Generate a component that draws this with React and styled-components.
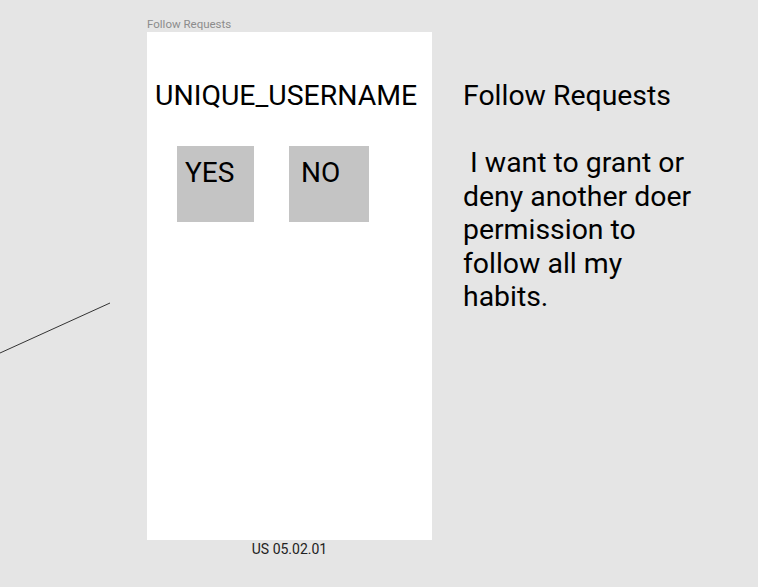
import React from 'react'
import styled, { createGlobalStyle } from 'styled-components'

const GlobalStyle = createGlobalStyle`
  html, body {
    margin: 0;
    padding: 0;
    background-color: #e5e5e5;
  }
  body {
    font-family: Roboto, "Liberation Sans", sans-serif;
  }
`

const Canvas = styled.div`
  position: relative;
  min-height: 587px;
  display: flex;
  align-items: flex-start;
  padding: 17px 0 0 147px;
  box-sizing: border-box;
  background-color: #e5e5e5;
  overflow: hidden;
`

const Connector = styled.svg`
  position: absolute;
  left: 0;
  top: 300px;
`

const FrameColumn = styled.div`
  display: flex;
  flex-direction: column;
`

const FrameLabel = styled.div`
  font-size: 11.5px;
  line-height: 14px;
  height: 15px;
  color: #8c8c8c;
`

const Frame = styled.div`
  width: 285px;
  height: 508px;
  background-color: #ffffff;
  box-sizing: border-box;
  padding: 47px 0 0 8px;
  display: flex;
  flex-direction: column;
`

const Username = styled.div`
  font-size: 28.4px;
  line-height: 34px;
  color: #000;
`

const Buttons = styled.div`
  display: flex;
  gap: 35px;
  margin: 33px 0 0 22px;
`

const Choice = styled.div`
  width: ${p => p.$width}px;
  height: 76px;
  background-color: #c4c4c4;
  box-sizing: border-box;
  padding: 10px 0 0 ${p => p.$inset}px;
  font-size: 28px;
  line-height: 34px;
  color: #000;
`

const Caption = styled.div`
  font-size: 14px;
  line-height: 17px;
  text-align: center;
  color: #222;
  margin-top: 1px;
`

const Description = styled.div`
  margin: 62px 0 0 31px;
  width: 240px;
  font-size: 28.4px;
  line-height: 33.5px;
  color: #000;
  white-space: pre-wrap;
`

export default function App() {
  return (
    <>
      <GlobalStyle />
      <Canvas>
        <Connector width="112" height="56" viewBox="0 0 112 56">
          <line x1="0" y1="53" x2="110" y2="3" stroke="#333" strokeWidth="1" />
        </Connector>
        <FrameColumn>
          <FrameLabel>Follow Requests</FrameLabel>
          <Frame>
            <Username>UNIQUE_USERNAME</Username>
            <Buttons>
              <Choice $width={77} $inset={8}>YES</Choice>
              <Choice $width={80} $inset={12}>NO</Choice>
            </Buttons>
          </Frame>
          <Caption>US 05.02.01</Caption>
        </FrameColumn>
        <Description>{'Follow Requests\n\n I want to grant or deny another doer permission to follow all my habits.'}</Description>
      </Canvas>
    </>
  )
}
